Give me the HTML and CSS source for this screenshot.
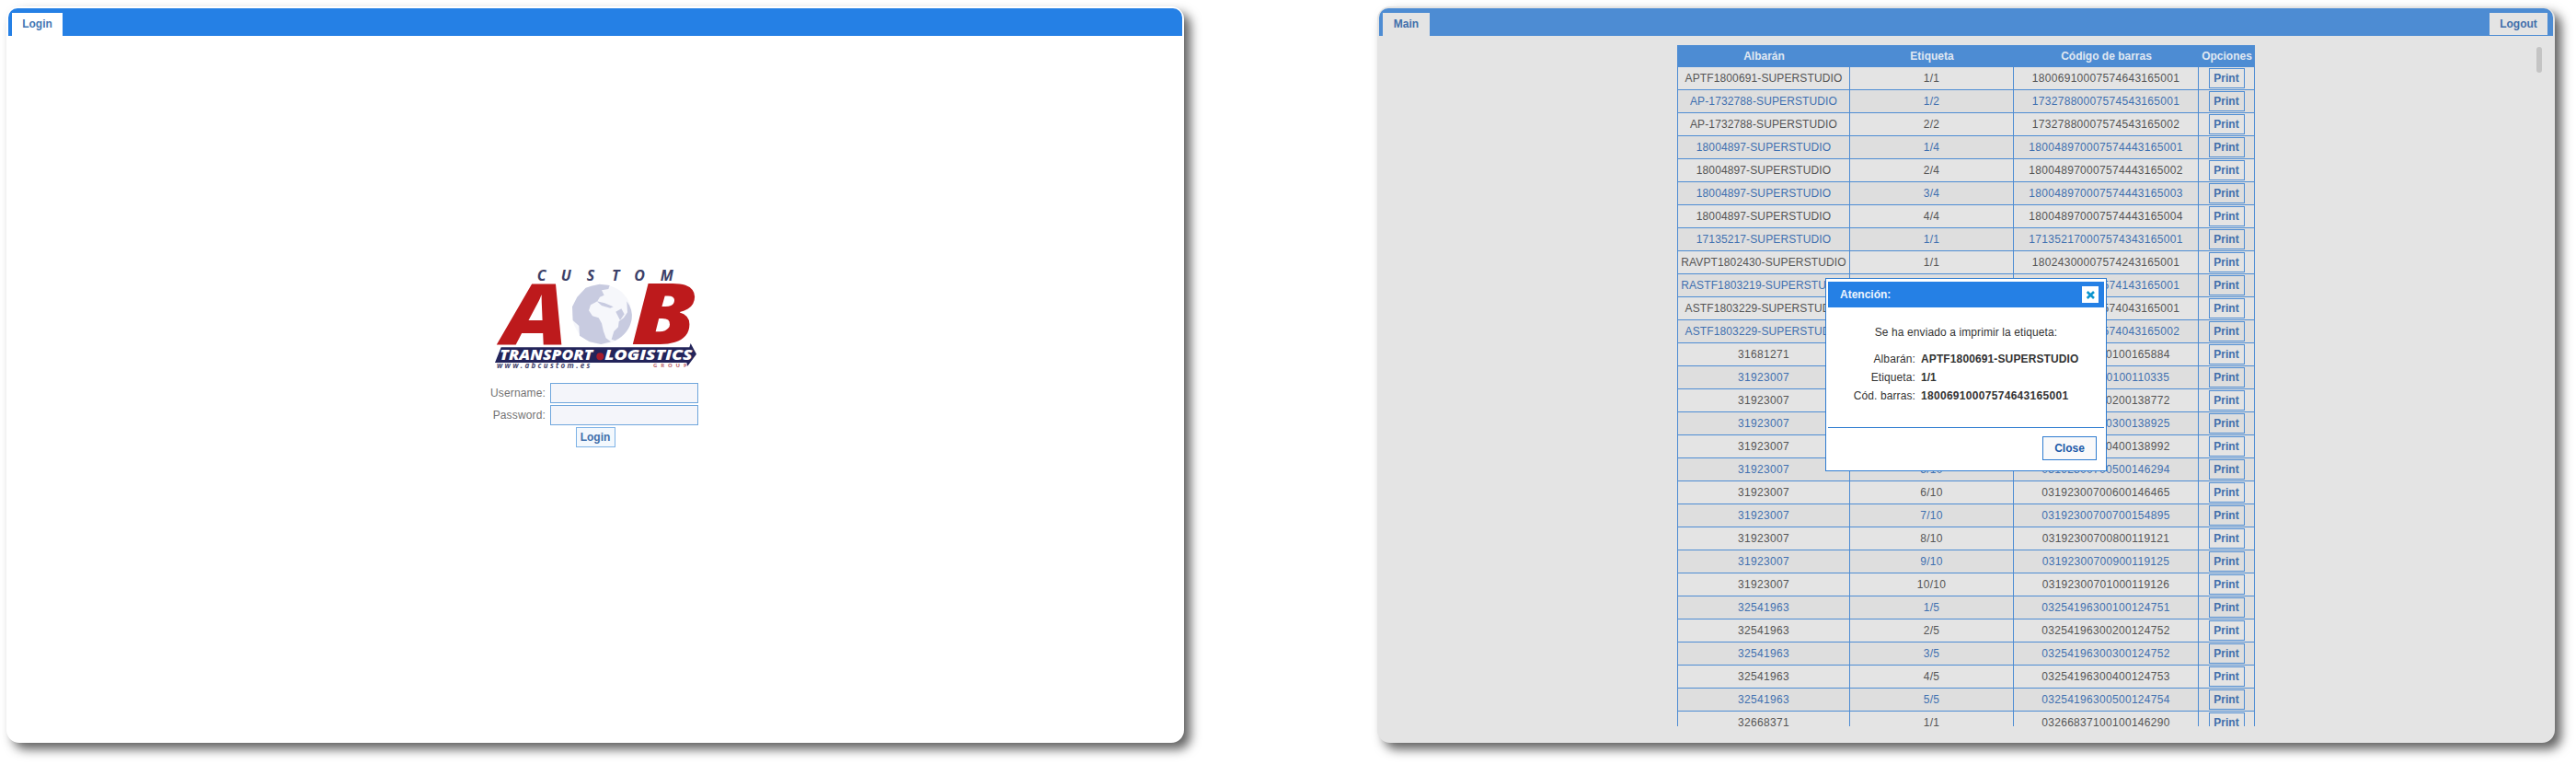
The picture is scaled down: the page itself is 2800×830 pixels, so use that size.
FILE: index.html
```html
<!DOCTYPE html>
<html lang="es">
<head>
<meta charset="utf-8">
<title>Custom</title>
<link rel="stylesheet" href="styles.css">
</head>
<body>
<section class="window">
  <header class="bar"><a class="tab login-tab">Login</a></header>
  <main class="login">
    <svg class="logo" viewBox="51 33 660 333" width="220" height="111" font-family="Open Sans, sans-serif">
      <text class="custom" y="75" font-size="48" text-anchor="middle" x="206 286 366 448 525 614">CUSTOM</text>
      <text class="big" x="78" y="283" font-size="278" textLength="214" lengthAdjust="spacingAndGlyphs">A</text>
      <text class="big" x="498" y="283" font-size="278" textLength="212" lengthAdjust="spacingAndGlyphs">B</text>
      <circle cx="403" cy="185" r="97" fill="#f6f7fb"/>
      <g fill="#c8cbe0">
        <path d="M350 98L368 92 395 86 428 90 424 102 402 106 410 122 396 128 388 142 366 154 360 172 372 190 392 196 402 214 408 240 416 262 432 274 400 282 362 274 330 254 328 222 308 204 306 160 322 128Z"/>
        <path d="M386 142L412 148 440 160 430 164 402 156Z"/>
        <path d="M448 176L466 166 476 184 462 204Z"/>
        <path d="M484 142Q504 170 500 200Q492 246 446 270L434 266 442 240 456 226 458 208 474 196 486 178Z"/>
      </g>
      <path class="banner" d="M74 292H688L692 279L711 314L682 353L679 342H54Z"/>
      <text class="ban-text" x="70" y="334" font-size="47" textLength="303" lengthAdjust="spacingAndGlyphs">TRANSPORT</text>
      <circle cx="397" cy="322" r="12" fill="#a51c2c"/>
      <text class="ban-text" x="412" y="334" font-size="47" textLength="286" lengthAdjust="spacingAndGlyphs">LOGISTICS</text>
      <text class="url" x="60" y="361" font-size="24" textLength="304">www.abcustom.es</text>
      <text class="group" x="570" y="358" font-size="18" textLength="110">GROUP</text>
    </svg>
    <form class="form">
      <label for="user">Username:</label><input id="user" class="field" type="text">
      <label for="pass">Password:</label><input id="pass" class="field" type="password">
    </form>
    <button class="btn login-btn">Login</button>
  </main>
</section>

<section class="window dimmed">
  <header class="bar"><a class="tab main-tab">Main</a><a class="tab logout-tab">Logout</a></header>
  <main class="list">
    <table class="labels">
      <thead><tr><th class="c1">Albarán</th><th class="c2">Etiqueta</th><th class="c3">Código de barras</th><th class="c4">Opciones</th></tr></thead>
      <tbody id="rows"></tbody>
    </table>
    <span class="thumb"></span>
  </main>
  <div class="dialog">
    <div class="dialog-head"><span>Atención:</span>
      <span class="x"><svg width="18" height="18" viewBox="0 0 18 18"><path d="M5.7 6L13 13M13 6L5.7 13" stroke="#0d96cf" stroke-width="2.6" fill="none"/></svg></span>
    </div>
    <div class="dialog-body">
      <p class="msg">Se ha enviado a imprimir la etiqueta:</p>
      <dl class="info">
        <dt>Albarán:</dt><dd class="name">APTF1800691-SUPERSTUDIO</dd>
        <dt>Etiqueta:</dt><dd>1/1</dd>
        <dt>Cód. barras:</dt><dd class="digits">18006910007574643165001</dd>
      </dl>
    </div>
    <div class="dialog-foot"><button class="close">Close</button></div>
  </div>
</section>
<script src="rows.js"></script>
</body>
</html>
```

FILE: styles.css
```css
* { box-sizing: border-box; }
body {
  margin: 0;
  height: 830px;
  padding: 7px 0 0 7px;
  display: flex;
  gap: 210px;
  overflow: hidden;
  background: #fff;
  font: 12px/14px "Liberation Sans", Arial, sans-serif;
}
.window {
  flex: none;
  width: 1280px;
  height: 800px;
  padding: 2px;
  border-radius: 14px;
  background: #fff;
  box-shadow: 7px 7px 12px rgba(0, 0, 0, .62);
  position: relative;
}
.dimmed { background: #e4e4e4; }
.bar {
  height: 30px;
  padding: 5px 6px 0 4px;
  display: flex;
  justify-content: space-between;
  align-items: flex-start;
  border-radius: 10px 10px 0 0;
  background: #2580e5;
}
.dimmed .bar { background: #4d8cd3; }
.tab {
  height: 25px;
  padding-top: 5px;
  text-align: center;
  font-weight: bold;
  color: #4377b4;
  background: #fff;
}
.dimmed .tab { background: #e4e4e4; color: #416fab; }
.login-tab { width: 55px; }
.main-tab { width: 51px; }
.logout-tab { width: 63px; }
.dimmed .logout-tab { height: 24px; }

.login {
  padding-top: 252px;
  display: flex;
  flex-direction: column;
  align-items: center;
}
.logo { display: block; }
.custom { fill: #3c4068; font-weight: 700; font-style: italic; }
.big { fill: #bd1a1c; font-weight: 800; font-style: italic; }
.banner { fill: #23245a; }
.ban-text { fill: #fff; font-weight: 800; font-style: italic; }
.url { fill: #45466f; font-weight: 700; font-style: italic; }
.group { fill: #b8606a; font-weight: 700; }
.form {
  margin-top: 14px;
  display: grid;
  grid-template-columns: 58px 161px;
  grid-auto-rows: 22px;
  gap: 2px 5px;
  align-items: center;
  color: #737373;
}
.form label { justify-self: end; white-space: nowrap; letter-spacing: .15px; }
.field {
  width: 161px;
  height: 22px;
  border: 1px solid #6fa6dc;
  background: #f4f5fa;
}
.btn {
  padding: 0;
  height: 22px;
  border: 1px solid #4d8cd3;
  background: none;
  font: bold 12px/14px "Liberation Sans", Arial, sans-serif;
  color: #416fab;
}
.login-btn { width: 43px; margin-top: 2px; border-color: #7db2e6; background: #f3f8fd; }

.list {
  height: 750px;
  padding: 10px 12px 0 324px;
  display: flex;
  justify-content: space-between;
  align-items: flex-start;
  overflow: hidden;
}
.labels {
  width: 628px;
  table-layout: fixed;
  border-spacing: 0;
  border-left: 1px solid #4d8cd3;
  text-align: center;
}
.labels th {
  height: 24px;
  padding: 0;
  background: #4d8cd3;
  color: #e0e8f2;
}
.labels td {
  height: 25px;
  padding: 0;
  border-right: 1px solid #4d8cd3;
  border-bottom: 1px solid #4d8cd3;
  color: #555;
  white-space: nowrap;
}
.labels tr:nth-child(even) td { background: #dedede; color: #3f70b0; }
.c1 { width: 187px; }
.c2 { width: 178px; }
.c3 { width: 201px; }
.c4 { width: 61px; }
.labels .btn { width: 39px; display: block; margin: 0 auto; }
.digits { letter-spacing: .3px; }
.name { letter-spacing: .12px; }
.thumb {
  width: 6px;
  height: 28px;
  margin-top: 2px;
  border-radius: 3px;
  background: #c4c4c4;
}

.dialog {
  position: absolute;
  left: 487px;
  top: 295px;
  width: 306px;
  height: 210px;
  padding: 3px 2px 2px;
  border: 1px solid #2f7cd0;
  background: #fff;
  color: #333;
}
.dialog-head {
  height: 28px;
  padding: 0 6px 0 13px;
  display: flex;
  justify-content: space-between;
  align-items: center;
  background: #2580e5;
  color: #eef5fd;
  font-weight: bold;
}
.x { width: 18px; height: 18px; background: #fff; }
.x svg { display: block; }
.dialog-body { height: 130px; padding-top: 20px; }
.msg { margin: 0; text-align: center; letter-spacing: .1px; }
.info {
  margin: 12px 0 0;
  display: grid;
  grid-template-columns: 95px 1fr;
  grid-auto-rows: 20px;
  column-gap: 6px;
  align-items: center;
}
.info dt { text-align: right; letter-spacing: .1px; }
.info dd { margin: 0; font-weight: bold; }
.dialog-foot {
  border-top: 1px solid #2f7cd0;
  padding: 9px 8px 0;
  display: flex;
  justify-content: flex-end;
}
.close {
  width: 59px;
  height: 26px;
  padding: 0;
  border: 1px solid #2f7cd0;
  background: #f9f9fa;
  font: bold 12px/14px "Liberation Sans", Arial, sans-serif;
  color: #1c5aa8;
}
```

FILE: rows.js
```js
const rows = [
  ["APTF1800691-SUPERSTUDIO", "1/1", "18006910007574643165001"],
  ["AP-1732788-SUPERSTUDIO", "1/2", "17327880007574543165001"],
  ["AP-1732788-SUPERSTUDIO", "2/2", "17327880007574543165002"],
  ["18004897-SUPERSTUDIO", "1/4", "180048970007574443165001"],
  ["18004897-SUPERSTUDIO", "2/4", "180048970007574443165002"],
  ["18004897-SUPERSTUDIO", "3/4", "180048970007574443165003"],
  ["18004897-SUPERSTUDIO", "4/4", "180048970007574443165004"],
  ["17135217-SUPERSTUDIO", "1/1", "171352170007574343165001"],
  ["RAVPT1802430-SUPERSTUDIO", "1/1", "18024300007574243165001"],
  ["RASTF1803219-SUPERSTUDIO", "1/1", "18032190007574143165001"],
  ["ASTF1803229-SUPERSTUDIO", "1/2", "18032290007574043165001"],
  ["ASTF1803229-SUPERSTUDIO", "2/2", "18032290007574043165002"],
  ["31681271", "1/1", "03168127100100165884"],
  ["31923007", "1/10", "03192300700100110335"],
  ["31923007", "2/10", "03192300700200138772"],
  ["31923007", "3/10", "03192300700300138925"],
  ["31923007", "4/10", "03192300700400138992"],
  ["31923007", "5/10", "03192300700500146294"],
  ["31923007", "6/10", "03192300700600146465"],
  ["31923007", "7/10", "03192300700700154895"],
  ["31923007", "8/10", "03192300700800119121"],
  ["31923007", "9/10", "03192300700900119125"],
  ["31923007", "10/10", "03192300701000119126"],
  ["32541963", "1/5", "03254196300100124751"],
  ["32541963", "2/5", "03254196300200124752"],
  ["32541963", "3/5", "03254196300300124752"],
  ["32541963", "4/5", "03254196300400124753"],
  ["32541963", "5/5", "03254196300500124754"],
  ["32668371", "1/1", "03266837100100146290"]
];
document.getElementById("rows").innerHTML = rows.map(([a, e, c]) =>
  `<tr><td class="${a.includes("-") ? "name" : "digits"}">${a}</td><td class="digits">${e}</td><td class="digits">${c}</td><td><button class="btn">Print</button></td></tr>`
).join("");
```
